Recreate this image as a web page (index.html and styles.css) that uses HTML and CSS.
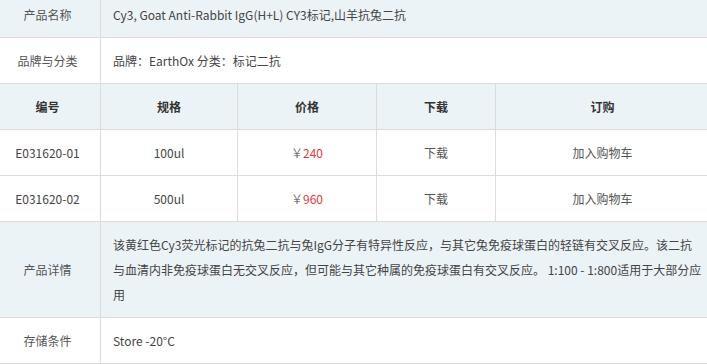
FILE: index.html
```html
<!DOCTYPE html>
<html lang="zh">
<head>
<meta charset="utf-8">
<link rel="stylesheet" href="styles.css">
</head>
<body>
<div class="wrap">
<table class="spec">
  <colgroup>
    <col class="c1"><col class="c2"><col class="c3"><col class="c4"><col class="c5">
  </colgroup>
  <tr class="shade">
    <td class="label">产品名称</td>
    <td class="value" colspan="4">Cy3, Goat Anti-Rabbit IgG(H+L) CY3标记,山羊抗兔二抗</td>
  </tr>
  <tr>
    <td class="label">品牌与分类</td>
    <td class="value" colspan="4">品牌：EarthOx 分类：标记二抗</td>
  </tr>
  <tr class="shade head">
    <th>编号</th><th>规格</th><th>价格</th><th>下载</th><th>订购</th>
  </tr>
  <tr class="item">
    <td>E031620-01</td><td>100ul</td><td><span class="yen">￥</span><span class="price">240</span></td><td class="link">下载</td><td class="link">加入购物车</td>
  </tr>
  <tr class="item">
    <td>E031620-02</td><td>500ul</td><td><span class="yen">￥</span><span class="price">960</span></td><td class="link">下载</td><td class="link">加入购物车</td>
  </tr>
  <tr class="shade">
    <td class="label">产品详情</td>
    <td class="value" colspan="4">该黄红色Cy3荧光标记的抗兔二抗与兔IgG分子有特异性反应，与其它兔免疫球蛋白的轻链有交叉反应。该二抗与血清内非免疫球蛋白无交叉反应，但可能与其它种属的免疫球蛋白有交叉反应。 1:100 - 1:800适用于大部分应用</td>
  </tr>
  <tr>
    <td class="label">存储条件</td>
    <td class="value" colspan="4">Store -20°C</td>
  </tr>
</table>
</div>
</body>
</html>
```
FILE: styles.css
```css
html, body {
  margin: 0;
  padding: 0;
  overflow: hidden;
  background: #fff;
}
body {
  font-family: "Noto Sans CJK SC", "Noto Sans", sans-serif;
  font-size: 12px;
  color: #444;
}
.wrap {
  margin: -9px 0 0 -6px;
  width: 715px;
}
.spec {
  width: 715px;
  border-collapse: collapse;
  table-layout: fixed;
}
.c1 { width: 106px; }
.c2 { width: 137px; }
.c3 { width: 139px; }
.c4 { width: 119px; }
.c5 { width: 214px; }
.spec td, .spec th {
  border: 1px solid #dcdcdc;
  padding: 10px 12px;
  line-height: 25px;
  vertical-align: middle;
  font-size: 12px;
}
.shade { background: #ecf3f7; }
.spec td.label {
  text-align: center;
  color: #555;
}
.spec td.value {
  text-align: left;
  color: #444;
  padding-right: 7px;
}
.head th {
  font-weight: bold;
  color: #333;
  text-align: center;
}
.item td {
  text-align: center;
  color: #444;
}
.item td.link { color: #555; }
.yen { color: #777; }
.price { color: #e4393c; }
```
